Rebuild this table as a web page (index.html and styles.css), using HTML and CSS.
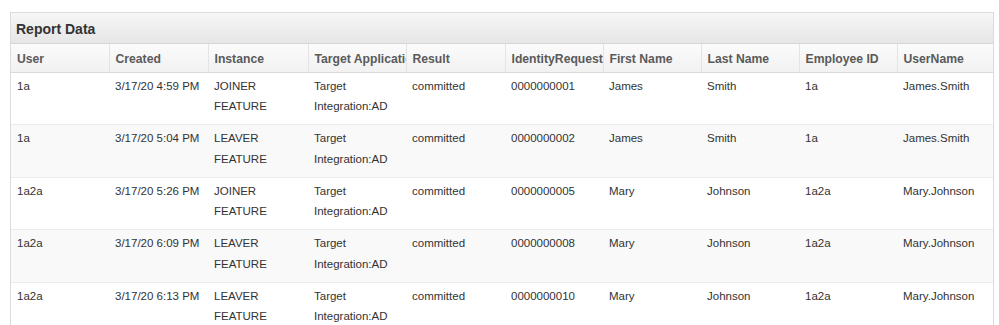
FILE: index.html
```html
<!DOCTYPE html>
<html>
<head>
<meta charset="utf-8">
<link rel="stylesheet" href="styles.css">
</head>
<body>
<div class="panel">
  <div class="panel-title">Report Data</div>
  <table class="grid">
    <colgroup>
      <col class="w98"><col class="w99"><col class="w100"><col class="w98"><col class="w99"><col class="w98"><col class="w98"><col class="w98"><col class="w98"><col class="w96">
    </colgroup>
    <thead>
      <tr>
        <th>User</th><th>Created</th><th>Instance</th><th>Target Application</th><th>Result</th><th>IdentityRequest</th><th>First Name</th><th>Last Name</th><th>Employee ID</th><th>UserName</th>
      </tr>
    </thead>
    <tbody>
      <tr>
        <td>1a</td><td>3/17/20 4:59 PM</td><td>JOINER<br>FEATURE</td><td>Target<br>Integration:AD</td><td>committed</td><td>0000000001</td><td>James</td><td>Smith</td><td>1a</td><td>James.Smith</td>
      </tr>
      <tr>
        <td>1a</td><td>3/17/20 5:04 PM</td><td>LEAVER<br>FEATURE</td><td>Target<br>Integration:AD</td><td>committed</td><td>0000000002</td><td>James</td><td>Smith</td><td>1a</td><td>James.Smith</td>
      </tr>
      <tr>
        <td>1a2a</td><td>3/17/20 5:26 PM</td><td>JOINER<br>FEATURE</td><td>Target<br>Integration:AD</td><td>committed</td><td>0000000005</td><td>Mary</td><td>Johnson</td><td>1a2a</td><td>Mary.Johnson</td>
      </tr>
      <tr>
        <td>1a2a</td><td>3/17/20 6:09 PM</td><td>LEAVER<br>FEATURE</td><td>Target<br>Integration:AD</td><td>committed</td><td>0000000008</td><td>Mary</td><td>Johnson</td><td>1a2a</td><td>Mary.Johnson</td>
      </tr>
      <tr>
        <td>1a2a</td><td>3/17/20 6:13 PM</td><td>LEAVER<br>FEATURE</td><td>Target<br>Integration:AD</td><td>committed</td><td>0000000010</td><td>Mary</td><td>Johnson</td><td>1a2a</td><td>Mary.Johnson</td>
      </tr>
    </tbody>
  </table>
</div>
</body>
</html>
```
FILE: styles.css
```css
html, body {
  margin: 0;
  background: #fff;
}
body {
  padding: 12px 6px 0 10px;
  font-family: "Liberation Sans", Arial, Helvetica, sans-serif;
  color: #333;
}
.panel {
  width: 984px;
  box-sizing: border-box;
  border: 1px solid #dcdcdc;
  border-bottom: none;
}
.panel-title {
  height: 31px;
  box-sizing: border-box;
  padding: 1px 5px 0;
  line-height: 30px;
  font-size: 14px;
  font-weight: bold;
  color: #333;
  background: linear-gradient(#f6f6f6, #e6e6e6);
  border-bottom: 1px solid #d6d6d6;
}
.grid {
  width: 100%;
  border-collapse: collapse;
  table-layout: fixed;
}
.w96 { width: 96px; }
.w98 { width: 98px; }
.w99 { width: 99px; }
.w100 { width: 100px; }
.grid th {
  height: 28px;
  box-sizing: border-box;
  padding: 2px 6px 0;
  text-align: left;
  font-size: 12.2px;
  font-weight: bold;
  color: #5a5a5a;
  white-space: nowrap;
  overflow: hidden;
  background: linear-gradient(#fbfbfb, #f1f1f1);
  border-left: 1px solid #e4e4e4;
  border-bottom: 1px solid #dadada;
}
.grid th:first-child {
  border-left: none;
}
.grid td {
  padding: 3px 6px 7px;
  vertical-align: top;
  font-size: 11.5px;
  line-height: 20.75px;
  color: #333;
  border-top: 1px solid #ececec;
  white-space: nowrap;
  overflow: hidden;
}
.grid tbody tr:nth-child(even) td {
  background: #f9f9f9;
}
```
